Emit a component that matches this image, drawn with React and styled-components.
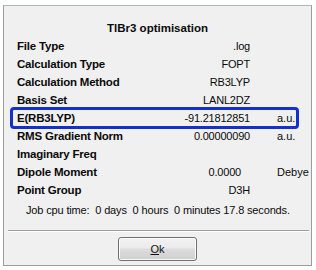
import React from 'react';
import styled, { createGlobalStyle } from 'styled-components';

const GlobalStyle = createGlobalStyle`
  body {
    margin: 0;
    background: #ffffff;
    font-family: "Liberation Sans", Arial, sans-serif;
  }
`;

const Dialog = styled.div`
  margin: 5px 0 0 3px;
  width: 309px;
  height: 261px;
  box-sizing: border-box;
  background: #f0f0f0;
  border: 1px solid #9c9c9c;
  border-top-color: #a9b7c0;
  display: flex;
  flex-direction: column;
  color: #0a0a0a;
`;

const Title = styled.div`
  margin-top: 13px;
  height: 18px;
  line-height: 18px;
  text-align: center;
  font-weight: bold;
  font-size: 11.5px;
`;

const Rows = styled.div`
  display: flex;
  flex-direction: column;
  padding-left: 13px;
`;

const Row = styled.div`
  position: relative;
  display: grid;
  grid-template-columns: 133px 100px 27px auto;
  height: 18px;
  line-height: 18px;
  font-size: 11px;

  &::before {
    content: '';
    display: ${(p) => (p.$highlight ? 'block' : 'none')};
    position: absolute;
    left: -7px;
    top: -2px;
    width: 289px;
    height: 22px;
    box-sizing: border-box;
    border: 3px solid #1430c8;
    border-radius: 4px;
  }
`;

const Label = styled.span`
  font-weight: bold;
  font-size: 11.5px;
  letter-spacing: -0.2px;
  white-space: nowrap;
`;

const Value = styled.span`
  text-align: right;
  white-space: nowrap;
  letter-spacing: -0.2px;
  margin-right: ${(p) => p.$shift || 0}px;
  margin-left: ${(p) => -(p.$shift || 0)}px;
`;

const Unit = styled.span`
  grid-column: 4;
  white-space: nowrap;
`;

const CpuTime = styled.div`
  margin-top: 2px;
  height: 18px;
  line-height: 18px;
  font-size: 11px;
  letter-spacing: -0.15px;
  padding-left: 22px;
  white-space: pre;
`;

const Separator = styled.div`
  margin: 11px 2px 0 4px;
  border-top: 1px solid #a0a0a0;
  border-bottom: 1px solid #ffffff;
`;

const Footer = styled.div`
  display: flex;
  justify-content: center;
  padding-top: 5px;
`;

const Button = styled.button`
  width: 79px;
  height: 24px;
  box-sizing: border-box;
  border: 1px solid #707070;
  border-radius: 3px;
  background: linear-gradient(to bottom, #f2f2f2 0%, #ebebeb 45%, #dddddd 50%, #cfcfcf 100%);
  box-shadow: inset 0 0 0 1px #fbfbfb;
  font-family: "Liberation Sans", Arial, sans-serif;
  font-size: 11px;
  color: #111;
  padding: 0;

  u {
    text-decoration: underline;
  }
`;

const rows = [
  { label: 'File Type', value: '.log' },
  { label: 'Calculation Type', value: 'FOPT' },
  { label: 'Calculation Method', value: 'RB3LYP' },
  { label: 'Basis Set', value: 'LANL2DZ' },
  { label: 'E(RB3LYP)', value: '-91.21812851', unit: 'a.u.', highlight: true },
  { label: 'RMS Gradient Norm', value: '0.00000090', unit: 'a.u.' },
  { label: 'Imaginary Freq', value: '' },
  { label: 'Dipole Moment', value: '0.0000', unit: 'Debye', shift: 9 },
  { label: 'Point Group', value: 'D3H' },
];

export default function App() {
  return (
    <>
      <GlobalStyle />
      <Dialog>
        <Title>TlBr3 optimisation</Title>
        <Rows>
          {rows.map((r) => (
            <Row key={r.label} $highlight={r.highlight}>
              <Label>{r.label}</Label>
              <Value $shift={r.shift}>{r.value}</Value>
              {r.unit && <Unit>{r.unit}</Unit>}
            </Row>
          ))}
        </Rows>
        <CpuTime>{'Job cpu time:  0 days  0 hours  0 minutes 17.8 seconds.'}</CpuTime>
        <Separator />
        <Footer>
          <Button>
            <u>O</u>k
          </Button>
        </Footer>
      </Dialog>
    </>
  );
}
